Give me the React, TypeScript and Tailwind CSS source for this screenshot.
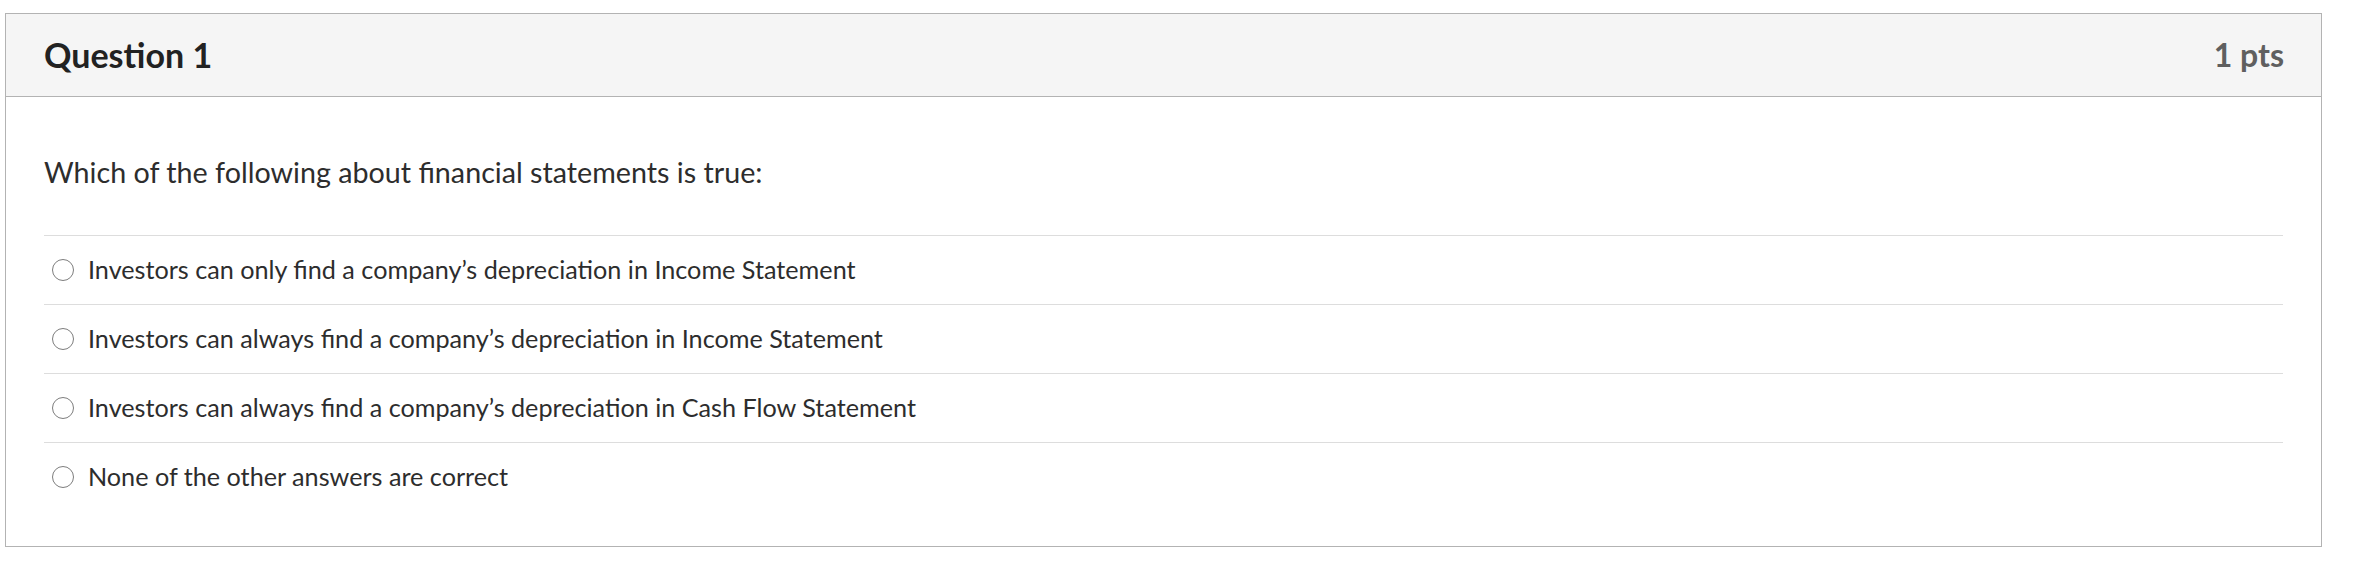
import React from 'react';

const answers = [
  'Investors can only find a company’s depreciation in Income Statement',
  'Investors can always find a company’s depreciation in Income Statement',
  'Investors can always find a company’s depreciation in Cash Flow Statement',
  'None of the other answers are correct',
];

const App: React.FC = () => {
  return (
    <div className="w-[2356px] h-[566px] bg-white pt-[13px] pl-[5px] font-['Lato','Liberation_Sans',sans-serif]">
      <div className="w-[2317px] h-[534px] border border-[#b3b3b3] flex flex-col">
        {/* Header */}
        <div className="h-[83px] shrink-0 bg-[#f5f5f5] border-b border-[#b3b3b3] pl-[38px] pr-[37px] flex items-center justify-between">
          <h2 className="text-[34px] font-bold text-[#222222] leading-none">Question 1</h2>
          <span className="text-[32px] font-bold text-[#5f5f5f] leading-none">1 pts</span>
        </div>

        {/* Body */}
        <div className="px-[38px] pt-[55px]">
          <p className="text-[28.7px] leading-[40px] text-[#2d2d2d]">
            Which of the following about financial statements is true:
          </p>
          <div className="mt-[43px]">
            {answers.map((a) => (
              <label key={a} className="h-[69px] border-t border-[#dddddd] flex items-center pb-[3px] cursor-pointer">
                <span className="ml-[8px] mt-[3px] w-[22px] h-[22px] rounded-full border-[1.5px] border-[#7d7d7d] bg-white shrink-0" />
                <span className="ml-[14px] text-[25.2px] leading-[28px] text-[#2d2d2d]">{a}</span>
              </label>
            ))}
          </div>
        </div>
      </div>
    </div>
  );
};

export default App;
